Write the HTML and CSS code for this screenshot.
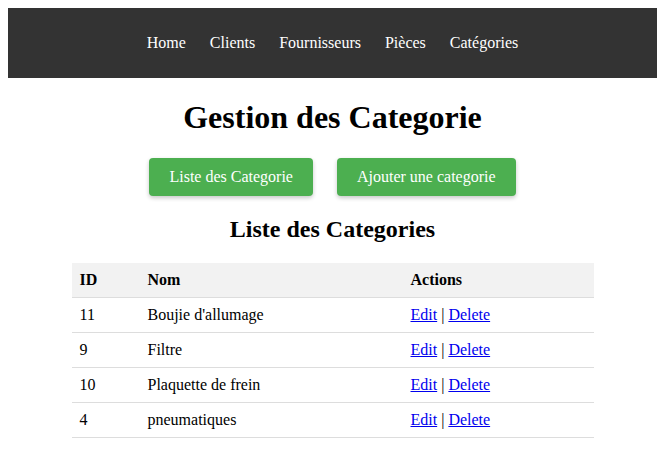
FILE: index.html
```html
<!DOCTYPE html>
<html lang="fr">
<head>
<meta charset="utf-8">
<title>Gestion des Categorie</title>
<link rel="stylesheet" href="styles.css">
</head>
<body>
<nav class="topnav">
  <a href="#">Home</a>
  <a href="#">Clients</a>
  <a href="#">Fournisseurs</a>
  <a href="#">Pièces</a>
  <a href="#">Catégories</a>
</nav>
<h1 class="title">Gestion des Categorie</h1>
<div class="actions-bar">
  <a class="btn" href="#">Liste des Categorie</a>
  <a class="btn" href="#">Ajouter une categorie</a>
</div>
<h2 class="subtitle">Liste des Categories</h2>
<table class="data-table">
  <colgroup>
    <col class="col-id">
    <col class="col-nom">
    <col class="col-actions">
  </colgroup>
  <thead>
    <tr><th>ID</th><th>Nom</th><th>Actions</th></tr>
  </thead>
  <tbody>
    <tr><td>11</td><td>Boujie d'allumage</td><td><a href="#">Edit</a> | <a href="#">Delete</a></td></tr>
    <tr><td>9</td><td>Filtre</td><td><a href="#">Edit</a> | <a href="#">Delete</a></td></tr>
    <tr><td>10</td><td>Plaquette de frein</td><td><a href="#">Edit</a> | <a href="#">Delete</a></td></tr>
    <tr><td>4</td><td>pneumatiques</td><td><a href="#">Edit</a> | <a href="#">Delete</a></td></tr>
  </tbody>
</table>
</body>
</html>
```
FILE: styles.css
```css
body {
  margin: 8px;
  font-family: "Liberation Serif", "Times New Roman", serif;
  font-size: 16px;
  color: #000;
  background: #fff;
}
.topnav {
  background: #333;
  display: flex;
  justify-content: center;
  gap: 24px;
  margin: 0 -1px;
  padding: 25px 0;
  line-height: 20px;
}
.topnav a {
  color: #fff;
  text-decoration: none;
}
.title {
  text-align: center;
  font-size: 32px;
  margin: 21.44px 0;
}
.actions-bar {
  display: flex;
  justify-content: center;
  gap: 24px;
}
.btn {
  display: inline-block;
  background: #4CAF50;
  color: #fff;
  text-decoration: none;
  padding: 10px 20px;
  line-height: 18px;
  border-radius: 4px;
  box-shadow: 0 2px 4px rgba(0, 0, 0, 0.22);
}
.subtitle {
  text-align: center;
  font-size: 24px;
  margin: 19.92px 0;
}
.data-table {
  width: 522px;
  margin: 0 auto;
  border-collapse: collapse;
}
.col-id { width: 68px; }
.col-nom { width: 263px; }
.data-table th,
.data-table td {
  text-align: left;
  padding: 8px;
  border-bottom: 1px solid #ddd;
  line-height: 18px;
}
.data-table th {
  background: #f2f2f2;
}
.data-table td a {
  color: #0000ee;
}
```
